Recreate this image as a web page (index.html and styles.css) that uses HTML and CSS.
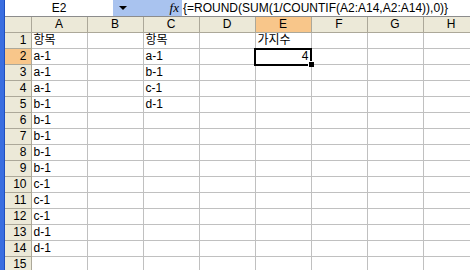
FILE: index.html
```html
<!DOCTYPE html>
<html lang="ko">
<head>
    <meta charset="UTF-8">
    <title>Sheet1</title>
    <link rel="stylesheet" href="styles.css">
</head>
<body>
<div class="window">
    <div class="edge"></div>
    <div class="main">
        <div class="formula-bar">
            <div class="name-box">E2</div>
            <div class="name-drop"><span class="arrow"></span></div>
            <div class="fx">fx</div>
            <div class="formula">{=ROUND(SUM(1/COUNTIF(A2:A14,A2:A14)),0)}</div>
        </div>
        <table class="sheet">
            <colgroup>
                <col class="col-head">
                <col class="col"><col class="col"><col class="col"><col class="col">
                <col class="col"><col class="col"><col class="col"><col class="col">
            </colgroup>
            <thead>
                <tr>
                    <th class="corner"></th>
                    <th>A</th><th>B</th><th>C</th><th>D</th>
                    <th class="selected">E</th><th>F</th><th>G</th><th>H</th>
                </tr>
            </thead>
            <tbody id="rows"></tbody>
        </table>
    </div>
</div>

<script>
    // column A values, rows 1-14
    const colA = ['항목', 'a-1', 'a-1', 'a-1', 'b-1', 'b-1', 'b-1', 'b-1', 'b-1', 'c-1', 'c-1', 'c-1', 'd-1', 'd-1'];
    const colC = ['항목', 'a-1', 'b-1', 'c-1', 'd-1'];

    const body = document.getElementById('rows');
    for (let r = 1; r <= 15; r++) {
        const row = document.createElement('tr');
        let html = `<th class="${r === 2 ? 'selected' : ''}">${r}</th>`;
        html += `<td>${colA[r - 1] || ''}</td>`;
        html += '<td></td>';
        html += `<td>${colC[r - 1] || ''}</td>`;
        html += '<td></td>';
        if (r === 1) {
            html += '<td>가지수</td>';
        } else if (r === 2) {
            html += '<td class="active">4<span class="handle"></span></td>';
        } else {
            html += '<td></td>';
        }
        html += '<td></td><td></td><td></td>';
        row.innerHTML = html;
        body.appendChild(row);
    }
</script>
</body>
</html>
```

FILE: styles.css
```css
body {
    margin: 0;
    padding: 0;
    overflow: hidden;
    background-color: #fff;
    font-family: "Liberation Sans", "Noto Sans CJK KR", sans-serif;
    font-size: 12px;
    color: #000;
}

.window {
    display: flex;
    height: 270px;
}

.edge {
    width: 5px;
    flex: none;
    background-color: #3a6ee0;
    border-right: 1px solid #1e4fc0;
    box-sizing: border-box;
}

.main {
    flex: 1;
    overflow: hidden;
}

.formula-bar {
    display: flex;
    height: 17px;
    border-bottom: 1px solid #8c8c8c;
    box-sizing: border-box;
    background-color: #a9c3ef;
}

.name-box {
    width: 108px;
    background-color: #fff;
    text-align: center;
    line-height: 16px;
}

.name-drop {
    width: 28px;
    display: flex;
    align-items: center;
    justify-content: center;
}

.arrow {
    width: 0;
    height: 0;
    border-left: 4px solid transparent;
    border-right: 4px solid transparent;
    border-top: 4px solid #000;
    margin-left: -8px;
}

.fx {
    width: 41px;
    text-align: right;
    padding-right: 3px;
    box-sizing: border-box;
    font-family: "Liberation Serif", serif;
    font-style: italic;
    font-size: 13px;
    line-height: 16px;
}

.formula {
    flex: 1;
    background-color: #fff;
    line-height: 16px;
    padding-left: 1px;
    white-space: nowrap;
}

.sheet {
    border-collapse: collapse;
    table-layout: fixed;
    width: 418px;
}

.col-head {
    width: 26px;
}

.col {
    width: 56px;
}

.sheet th,
.sheet td {
    padding: 0;
    height: 15px;
    line-height: 15px;
    border-right: 1px solid #c0c0c0;
    border-bottom: 1px solid #c0c0c0;
    white-space: nowrap;
    overflow: visible;
}

.sheet th {
    background-color: #ece9d8;
    font-weight: normal;
    text-align: center;
    border-right-color: #aca899;
    border-bottom-color: #aca899;
}

.sheet thead th {
    height: 15px;
    line-height: 15px;
}

.sheet tbody th {
    text-align: right;
    padding-right: 4px;
}

.sheet th.selected {
    background-color: #f8c68a;
}

.sheet td {
    padding-left: 2px;
    text-align: left;
}

.sheet td.active {
    position: relative;
    text-align: right;
    padding-right: 2px;
    outline: 2px solid #000;
    outline-offset: -1px;
}

.handle {
    position: absolute;
    right: -3px;
    bottom: -3px;
    width: 5px;
    height: 5px;
    background-color: #000;
    border: 1px solid #fff;
    border-width: 1px 0 0 1px;
}
```
